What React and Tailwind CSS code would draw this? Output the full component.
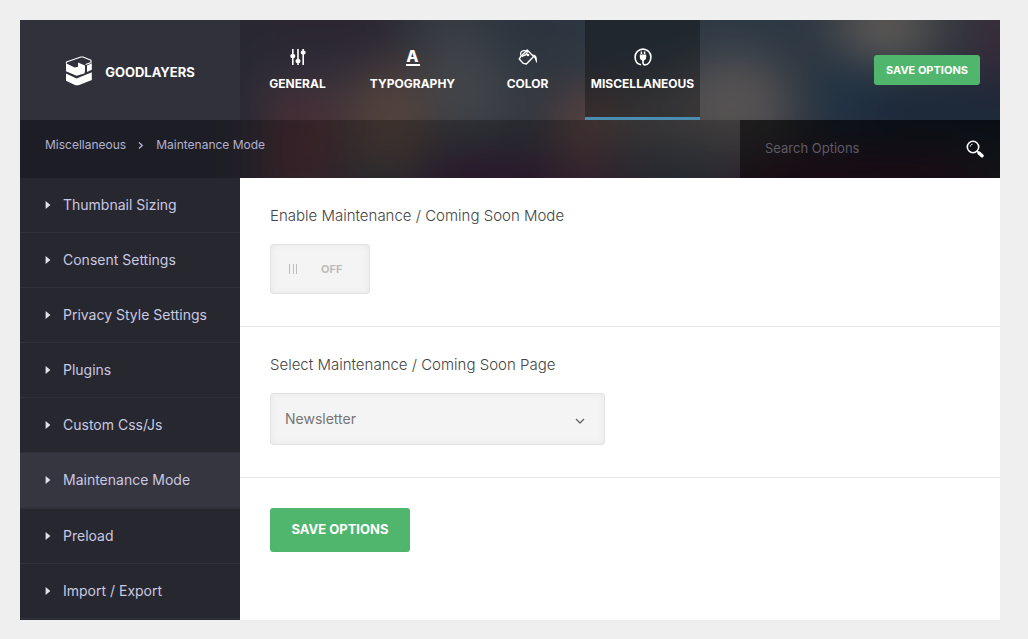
import React, { useState } from 'react';

// Soft colour clouds behind the header
function HeaderBackdrop() {
  return (
    <svg className="absolute inset-0 h-full w-full" viewBox="0 0 980 158" preserveAspectRatio="none" aria-hidden="true">
      <defs>
        <filter id="clouds" x="-10%" y="-40%" width="120%" height="180%" colorInterpolationFilters="sRGB">
          <feGaussianBlur stdDeviation="24" />
        </filter>
      </defs>
      <rect width="980" height="158" fill="#32373f" />
      <g filter="url(#clouds)">
        <rect x="-60" y="-60" width="1100" height="280" fill="#32373f" />
        <rect x="-60" y="-60" width="300" height="280" fill="#272832" />
        <rect x="240" y="-60" width="140" height="110" fill="#2b2632" />
        <rect x="245" y="70" width="75" height="120" fill="#4a2d35" />
        <ellipse cx="370" cy="98" rx="42" ry="55" fill="#54423c" />
        <ellipse cx="450" cy="60" rx="40" ry="60" fill="#42454a" />
        <ellipse cx="510" cy="10" rx="50" ry="40" fill="#2b343e" />
        <ellipse cx="480" cy="170" rx="85" ry="30" fill="#391a38" />
        <ellipse cx="565" cy="105" rx="28" ry="38" fill="#5e423f" />
        <ellipse cx="625" cy="10" rx="70" ry="45" fill="#2d3944" />
        <ellipse cx="640" cy="95" rx="50" ry="35" fill="#4d4a4b" />
        <ellipse cx="745" cy="10" rx="65" ry="28" fill="#2b3845" />
        <ellipse cx="715" cy="85" rx="55" ry="50" fill="#575353" />
        <ellipse cx="570" cy="170" rx="40" ry="28" fill="#45283a" />
        <ellipse cx="835" cy="80" rx="50" ry="50" fill="#213344" />
        <rect x="850" y="60" width="200" height="65" fill="#1a2739" />
        <ellipse cx="865" cy="8" rx="48" ry="32" fill="#625d58" />
        <ellipse cx="985" cy="25" rx="32" ry="38" fill="#392738" />
        <ellipse cx="840" cy="175" rx="130" ry="38" fill="#4b1a34" />
      </g>
    </svg>
  );
}

function LogoIcon() {
  return (
    <svg width="28" height="30" viewBox="0 0 28 30" aria-hidden="true">
      {/* lid outline */}
      <path d="M1.4 7.4 V6 L15.8 1 H18 L26 4.2 V6.4 L20.6 8.4" fill="none" stroke="#fff" strokeWidth="1.1" strokeLinejoin="round" />
      {/* upper block */}
      <path d="M1 7.2 L9.6 11.6 L13 10.8 V6.4 L20 9.4 V15.6 L19.4 17.6 L11.6 19.8 L1 15.2 Z" fill="#fff" />
      <path d="M22 9.4 L26.8 7.2 V13.8 L22 16 Z" fill="#fff" />
      {/* lower block */}
      <path d="M1 17.4 L11.6 22.4 L26.8 16.2 V24 L13.6 29.2 H10.4 L1 24.8 Z" fill="#fff" />
    </svg>
  );
}

function GeneralIcon() {
  return (
    <svg width="18" height="18" viewBox="0 0 18 18" fill="#fff" aria-hidden="true">
      <rect x="3" y="1" width="1.6" height="16" />
      <rect x="8.2" y="1" width="1.6" height="16" />
      <rect x="13.4" y="1" width="1.6" height="16" />
      <rect x="1.4" y="6" width="4.8" height="4" rx="1.6" />
      <rect x="6.6" y="11" width="4.8" height="4" rx="1.6" />
      <rect x="11.8" y="2.4" width="4.8" height="4" rx="1.6" />
    </svg>
  );
}

function TypographyIcon() {
  return (
    <span aria-hidden="true" className="block w-3.5 border-b-2 border-white text-center text-base leading-4 font-extrabold">
      A
    </span>
  );
}

function ColorIcon() {
  return (
    <svg width="20" height="18" viewBox="0 0 20 18" fill="none" stroke="#fff" aria-hidden="true">
      <path d="M3 8.2 L9.2 2 L15.6 8.4 L8.4 16 L5.4 15.4 L1.2 11 Z" strokeWidth="1.4" strokeLinejoin="round" />
      <path d="M3 7.6 C1.8 5 3 3.2 5.8 2.6 C8 2.2 9.4 3 9 5 C8.6 6.8 6.4 8 4.2 7.8" strokeWidth="1.2" />
      <path d="M4 8.8 L9.4 4.8" strokeWidth="1" />
      <circle cx="10" cy="7" r="1.3" fill="#fff" stroke="none" />
      <path d="M14.2 7 C17.6 6.2 19.4 8 18.9 15 C17.4 14.2 17.8 11.2 15.6 9 Z" fill="#fff" stroke="none" />
    </svg>
  );
}

function MiscIcon() {
  return (
    <svg width="18" height="18" viewBox="0 0 18 18" fill="none" stroke="#fff" aria-hidden="true">
      <path d="M7 16.8 C3.2 16 1.1 12.8 1.1 9 A7.9 7.9 0 0 1 16.9 9 C16.9 12.8 14.8 16.9 10.8 16.9 C9.4 16.9 9 16 9 14.6 V12" strokeWidth="1.6" />
      <path d="M5.8 6.6 H12.2 V9 C12.2 11.2 11 12.2 10 12.4 H8 C7 12.2 5.8 11.2 5.8 9 Z" fill="#fff" stroke="none" />
      <path d="M7.4 3.6 V6 M10.6 3.6 V6" strokeWidth="1.5" />
    </svg>
  );
}

function SearchIcon() {
  return (
    <svg width="18" height="18" viewBox="0 0 18 18" fill="none" stroke="#fff" aria-hidden="true">
      <circle cx="7" cy="7" r="5.7" strokeWidth="1.6" />
      <path d="M4.2 6.6 C4.4 5.2 5.2 4.4 6.6 4.1" strokeWidth="1" />
      <path d="M13 13 L16 15.8" strokeWidth="3.4" strokeLinecap="round" />
      <path d="M10.8 10.8 L12.6 12.6" strokeWidth="1.4" />
    </svg>
  );
}

const tabs = [
  { label: 'GENERAL', icon: GeneralIcon },
  { label: 'TYPOGRAPHY', icon: TypographyIcon },
  { label: 'COLOR', icon: ColorIcon },
  { label: 'MISCELLANEOUS', icon: MiscIcon },
];

const menu = [
  'Thumbnail Sizing',
  'Consent Settings',
  'Privacy Style Settings',
  'Plugins',
  'Custom Css/Js',
  'Maintenance Mode',
  'Preload',
  'Import / Export',
];

function App() {
  const [tab, setTab] = useState('MISCELLANEOUS');
  const [page, setPage] = useState('Maintenance Mode');
  const [enabled, setEnabled] = useState(false);

  return (
    <div className="flex min-h-screen flex-col bg-[#efefef] pt-5 pr-7 pb-[19px] pl-5 font-[Inter,sans-serif]">
      <div className="flex grow flex-col bg-white">
        {/* --- HEADER --- */}
        <header className="relative overflow-hidden">
          <HeaderBackdrop />
          <div className="relative flex">
            <a href="#home" className="flex h-[100px] w-[220px] shrink-0 items-center justify-center gap-3 bg-[#31313b] pt-0.5 text-white">
              <LogoIcon />
              <span className="pt-1 text-[13px] font-bold">GOODLAYERS</span>
            </a>
            <nav className="flex grow">
              {tabs.map(({ label, icon: Icon }) => (
                <button
                  key={label}
                  type="button"
                  onClick={() => setTab(label)}
                  className={`flex w-[115px] flex-col items-center border-b-3 pt-7 text-xs font-bold text-white ${
                    tab === label ? 'border-[#4a8db0] bg-black/30' : 'border-transparent'
                  }`}
                >
                  <span className="flex h-[18px] items-center"><Icon /></span>
                  <span className="mt-2.5">{label}</span>
                </button>
              ))}
            </nav>
            <div className="flex items-center pr-5">
              <button type="button" className="h-[30px] w-[106px] rounded-[3px] bg-[#51b66d] text-[11px] font-bold text-white">
                SAVE OPTIONS
              </button>
            </div>
          </div>

          <div className="relative flex h-[58px] justify-between bg-black/25">
            <div className="flex items-start gap-3 pt-4 pl-[25px] text-xs leading-[18px] text-[#b1b1d0]">
              <a href="#misc">Miscellaneous</a>
              <svg width="6" height="18" viewBox="0 0 6 18" fill="none" stroke="#b1b1d0" strokeWidth="1.4" aria-hidden="true">
                <path d="M1 6.5 L4.2 9.5 L1 12.5" />
              </svg>
              <a href="#maintenance">Maintenance Mode</a>
            </div>
            <div className="flex w-[260px] items-center bg-black/50 pr-4 pl-[25px]">
              <input
                type="search"
                aria-label="Search Options"
                placeholder="Search Options"
                className="w-full min-w-0 bg-transparent text-[13px] text-white outline-none placeholder:text-[#5f5b66]"
              />
              <button type="button" aria-label="Search"><SearchIcon /></button>
            </div>
          </div>
        </header>

        <div className="flex grow">
          {/* --- SIDEBAR --- */}
          <nav className="w-[220px] shrink-0 bg-[#272730]">
            {menu.map((item) => (
              <a
                key={item}
                href="#option"
                onClick={() => setPage(item)}
                className={`flex items-center gap-3 border-[#30303a] py-[17px] pl-[25px] text-sm leading-5 text-[#c9c9e0] ${
                  page === item ? 'border-b-2 bg-[#363641]' : 'border-b'
                }`}
              >
                <svg width="6" height="8" viewBox="0 0 6 8" fill="#e2e2ee" aria-hidden="true">
                  <path d="M0.6 0 L5.4 4 L0.6 8 Z" />
                </svg>
                {item}
              </a>
            ))}
          </nav>

          {/* --- OPTIONS --- */}
          <main className="grow">
            <section className="border-b border-[#e8e8e8] px-[30px] pt-7 pb-8">
              <label htmlFor="enable" className="block text-[15px] leading-5 font-light text-[#444]">
                Enable Maintenance / Coming Soon Mode
              </label>
              <label className="mt-[18px] flex h-[50px] w-[100px] cursor-pointer items-center rounded-[3px] border border-[#e2e2e2] bg-[#f4f4f4] pl-[18px] text-[11px] font-bold text-[#bcbcbc] shadow-[inset_0_0_6px_#e8e8e8]">
                <input
                  id="enable"
                  type="checkbox"
                  checked={enabled}
                  onChange={(e) => setEnabled(e.target.checked)}
                  className="sr-only"
                />
                <span className="mr-6 flex h-2.5 w-2 justify-between">
                  <span className="w-px bg-[#bcbcbc]" />
                  <span className="w-px bg-[#bcbcbc]" />
                  <span className="w-px bg-[#bcbcbc]" />
                </span>
                {enabled ? 'ON' : 'OFF'}
              </label>
            </section>

            <section className="border-b border-[#e8e8e8] px-[30px] pt-7 pb-8">
              <label htmlFor="page" className="block text-[15px] leading-5 font-light text-[#444]">
                Select Maintenance / Coming Soon Page
              </label>
              <div className="relative mt-[18px] w-[335px] max-w-full">
                <select
                  id="page"
                  className="h-[52px] w-full appearance-none rounded-[3px] border border-[#e2e2e2] bg-[#f4f4f4] px-3.5 text-sm text-[#747474] shadow-[inset_0_0_6px_#e8e8e8]"
                >
                  <option>Newsletter</option>
                </select>
                <svg width="10" height="6" viewBox="0 0 10 6" fill="none" stroke="#666" strokeWidth="1.3" aria-hidden="true" className="pointer-events-none absolute top-[25px] right-5">
                  <path d="M1 1 L5 5 L9 1" />
                </svg>
              </div>
            </section>

            <div className="px-[30px] pt-[30px]">
              <button type="button" className="h-11 w-[140px] rounded-[3px] bg-[#51b66d] text-[13px] font-bold text-white">
                SAVE OPTIONS
              </button>
            </div>
          </main>
        </div>
      </div>
    </div>
  );
}

export default App;
